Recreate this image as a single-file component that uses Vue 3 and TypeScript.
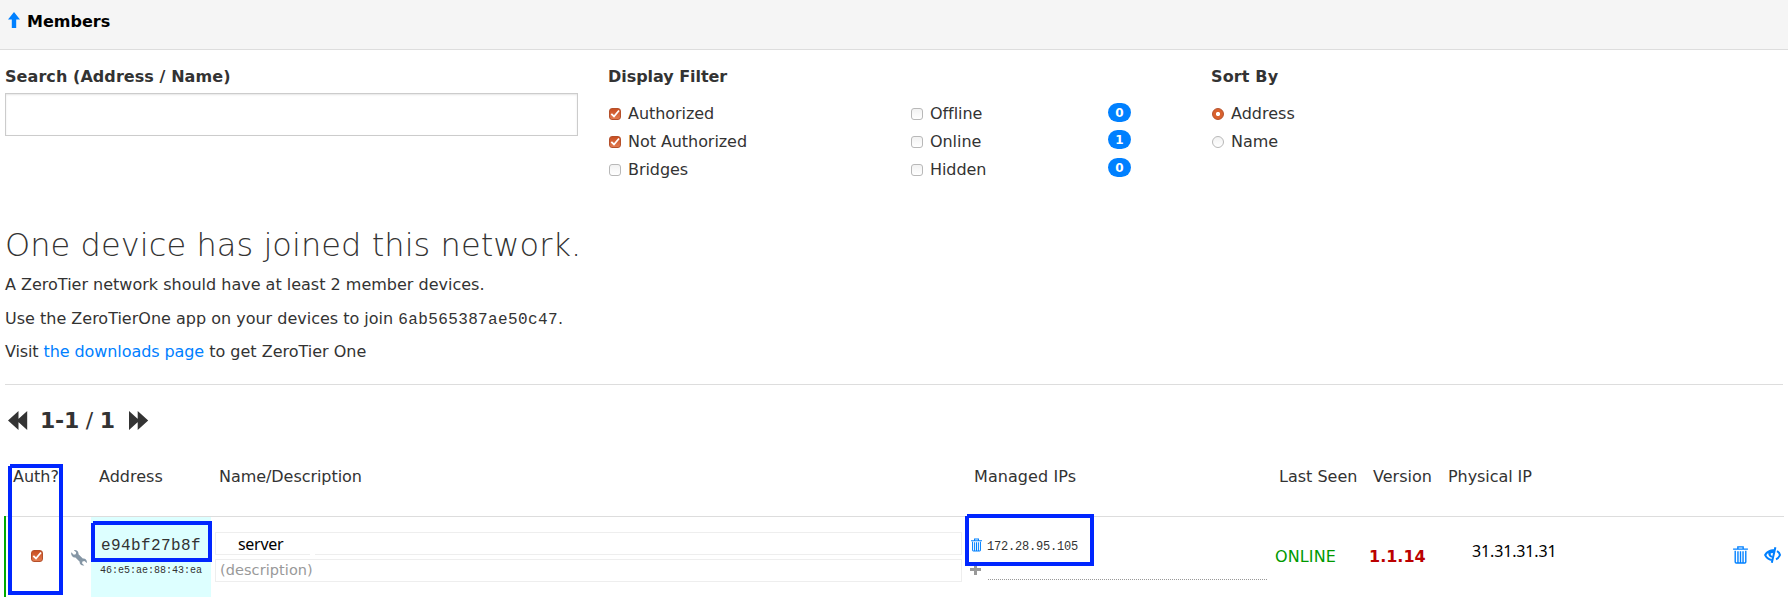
<script setup lang="ts">
interface Filter { label: string; checked: boolean }
interface Status { label: string; count: number }
const filters: Filter[] = [
  { label: 'Authorized', checked: true },
  { label: 'Not Authorized', checked: true },
  { label: 'Bridges', checked: false },
]
const statuses: Status[] = [
  { label: 'Offline', count: 0 },
  { label: 'Online', count: 1 },
  { label: 'Hidden', count: 0 },
]
</script>

<template>
  <main class="page">
    <header class="bar">
      <svg class="up" viewBox="0 0 12 16"><path d="M6 0L12 7.500H8.200V16H3.800V7.500H0Z" /></svg>
      <span class="bar-title">Members</span>
    </header>

    <section class="tools">
      <div class="col">
        <div class="title search-title">Search (Address / Name)</div>
        <input class="search" type="text" />
      </div>
      <div class="col">
        <div class="title filter-title">Display Filter</div>
        <div class="split">
          <div>
            <label v-for="f in filters" :key="f.label" class="opt tight">
              <span class="box" :class="{ on: f.checked }"><svg v-if="f.checked" viewBox="0 0 12 12"><path d="M2.300 5.800L5 8.500L10 2.500" /></svg></span>{{ f.label }}
            </label>
          </div>
          <div>
            <label v-for="s in statuses" :key="s.label" class="opt tight">
              <span class="box"></span>{{ s.label }}<b class="badge">{{ s.count }}</b>
            </label>
          </div>
        </div>
      </div>
      <div class="col">
        <div class="title sort-title">Sort By</div>
        <label class="opt"><span class="radio on"></span>Address</label>
        <label class="opt"><span class="radio"></span>Name</label>
      </div>
    </section>

    <section class="intro">
      <h2>One device has joined this network.</h2>
      <p>A ZeroTier network should have at least 2 member devices.</p>
      <p class="join">Use the ZeroTierOne app on your devices to join <code>6ab565387ae50c47</code>.</p>
      <p><span class="visit">Visit </span><a>the downloads page</a> to get ZeroTier One</p>
    </section>

    <nav class="pager">
      <svg viewBox="0 0 20 19"><path d="M10.500 0V19L0 9.500ZM19.200 0V19L8.700 9.500Z" /></svg>
      <span class="range"><b>1-1</b> / <b>1</b></span>
      <svg viewBox="0 0 20 19"><path d="M0 0V19L10.500 9.500ZM8.700 0V19L19.200 9.500Z" /></svg>
    </nav>

    <section class="members">
      <div class="row head">
        <span class="auth">Auth?</span><span></span><span class="h-addr">Address</span><span class="h-name">Name/Description</span>
        <span class="h-ips">Managed IPs</span><span class="h-seen">Last Seen</span><span class="h-ver">Version</span><span class="h-phys">Physical IP</span>
      </div>
      <div class="row item">
        <div class="c-auth"><span class="box on"><svg viewBox="0 0 12 12"><path d="M2.300 5.800L5 8.500L10 2.500" /></svg></span></div>
        <div class="c-tool">
          <svg viewBox="0 0 16 16"><path d="M0.300 2.300L2.800 4.700L4.700 4.200L5.200 2.300L2.900 0.200C5.500-.4 8 1.800 7.500 4.300L11.800 8.600C14 8 16.500 10.200 15.900 13L13.400 10.900L11.500 11.400L11 13.300L13.300 15.500C10.300 16.200 8.200 13.700 8.700 11.700L4.400 7.400C2 8-.5 5.500.3 2.300Z" /></svg>
        </div>
        <div class="c-addr"><code>e94bf27b8f</code><code class="mac">46:e5:ae:88:43:ea</code></div>
        <div class="c-name">
          <div class="field name">server</div>
          <div class="field desc">(description)</div>
        </div>
        <div class="c-ips">
          <div class="ip">
            <svg class="trash" viewBox="0 0 14 17"><path d="M0 3H14M4.500 3V.8H9.500V3M2 4.500V15Q2 16 3 16H11Q12 16 12 15V4.500M4.600 5V15.500M7 5V15.500M9.400 5V15.500" /></svg>
            <code>172.28.95.105</code>
          </div>
          <div class="add"><svg viewBox="0 0 11 11"><path d="M4 0H7V4H11V7H7V11H4V7H0V4H4Z" /></svg><span class="dots"></span></div>
        </div>
        <div class="c-seen">ONLINE</div>
        <div class="c-ver">1.1.14</div>
        <div class="c-phys">31.31.31.31</div>
        <div class="c-act">
          <svg class="trash" viewBox="0 0 14 17"><path d="M0 3H14M4.500 3V.8H9.500V3M2 4.500V15Q2 16 3 16H11Q12 16 12 15V4.500M4.600 5V15.500M7 5V15.500M9.400 5V15.500" /></svg>
          <svg class="hide" viewBox="0 0 17 16">
            <path class="lid" d="M10.400 2.200C5.500 2.200 1.800 4 0 8C1.500 11.300 4 13.300 7.600 13.900L8 12C5 11.400 3.300 9.800 2.400 8.200C2.800 7.200 3.400 6.500 4.200 6C4.200 8.600 5.600 10.400 8.300 10.700L8.700 9C7.200 8.600 6.400 7.600 6.800 6.200L9.800 6Z" />
            <path d="M11.400.2L7.800 15.800M13 4.200C14.500 5 15.600 6.300 16 8C15.200 10 13.700 11.500 12 12.300" />
          </svg>
        </div>
      </div>
      <i class="mark m1"></i><i class="mark m2"></i><i class="mark m3"></i>
    </section>
  </main>
</template>

<style>
body { margin: 0; background: #fff; }
</style>
<style scoped>
* { box-sizing: border-box; }
.page { height: 609px; overflow: hidden; font: 16px/28px "DejaVu Sans", sans-serif; color: #333; }
code { font-family: "Liberation Mono", monospace; letter-spacing: .38px; }
.bar { height: 50px; background: #f5f5f5; border-bottom: 1px solid #ddd; display: flex; padding: 12px 0 0 8px; color: #000; font-weight: bold; line-height: 20px; }
.up { width: 12px; height: 16px; fill: #0080ff; margin-right: 7px; }
.tools { display: grid; grid-template-columns: 603px 603px 1fr; padding: 14px 0 0 5px; height: 166px; }
.title { font-weight: bold; line-height: 26px; height: 36px; }
.search-title { height: 29px; letter-spacing: .07px; }
.filter-title { letter-spacing: -.05px; }
.sort-title { letter-spacing: .15px; }
.search { display: block; width: 573px; height: 43px; border: 1px solid #ccc; box-shadow: inset 0 1px 2px rgba(0,0,0,.1); }
.split { display: grid; grid-template-columns: 302px 1fr; }
.opt { display: flex; align-items: center; height: 28px; }
.tight { letter-spacing: -.06px; }
.box, .radio { width: 12px; height: 12px; margin: 0 7px 0 1px; border: 1px solid #b8b8b8; border-radius: 3px; background: linear-gradient(#f2f2f2, #fff); display: block; flex: none; }
.box.on { border-color: #b5502b; background: linear-gradient(#c94f22, #e27b50); }
.box svg { display: block; width: 12px; height: 12px; margin: -1px; fill: none; stroke: #fff; stroke-width: 1.8; }
.radio { border-radius: 50%; }
.radio.on { border-color: #b5502b; background: radial-gradient(circle, #fff 0 1.8px, #d9622f 2.4px); }
.badge { position: relative; top: -2px; width: 23px; height: 19px; border-radius: 10px; background: #0080ff; color: #fff; font-size: 12px; line-height: 20px; letter-spacing: 0; text-align: center; margin-left: auto; margin-right: 80px; }
.opt:nth-child(n+2) .badge { top: -3px; }
.intro { margin: 8px 5px 0; height: 161px; border-bottom: 1px solid #ddd; }
h2 { margin: 0; font-size: 32px; line-height: 42px; font-weight: 200; height: 47px; letter-spacing: .07px; }
p { margin: 0; height: 33.5px; line-height: 28px; }
.join { line-height: 27px; }
.visit { letter-spacing: -.12px; }
a { color: #0080ff; letter-spacing: -.08px; }
.pager { display: flex; align-items: center; padding: 0 0 0 8px; height: 72px; font-size: 22px; }
.pager svg { width: 20px; height: 19px; fill: #333; position: relative; top: -.5px; }
.range { margin: 0 14px 0 12px; width: 75px; letter-spacing: -.25px; white-space: nowrap; }
.members { position: relative; height: 152px; padding-left: 4px; }
.row { display: grid; grid-template-columns: 59px 28px 120px 754px 305px 95px 74px 1fr 55px; }
.head { height: 60px; margin-right: 4px; border-bottom: 1px solid #ddd; line-height: 40px; }
.head span { white-space: nowrap; }
.auth { padding-left: 9px; } .h-addr { padding-left: 8px; } .h-name { padding-left: 8px; letter-spacing: -.05px; } .h-ips { padding-left: 9px; letter-spacing: .08px; } .h-seen { padding-left: 9px; } .h-ver { padding-left: 8px; } .h-phys { padding-left: 9px; letter-spacing: -.07px; }
.item { height: 81px; border-left: 2px solid #0a0; margin-top: -1px; grid-template-columns: 57px 28px 120px 754px 305px 95px 74px 1fr 55px; }
.c-auth { padding: 34px 0 0 24px; }
.c-tool { padding: 34px 0 0 8px; }
.c-tool svg { display: block; width: 16px; height: 16px; fill: #8596a5; }
.c-addr { background: #dff; margin-top: 1px; padding: 14px 0 0 10px; }
.c-addr code { display: block; line-height: 30px; height: 32px; letter-spacing: .4px; }
.c-addr .mac { font-size: 10px; line-height: 16px; letter-spacing: 0; margin-left: -1px; }
.c-name { padding: 16px 3px 0 4px; }
.field { border: 1px solid #eee; height: 23px; line-height: 21px; margin-bottom: 4px; padding-left: 4px; }
.name { position: relative; font-family: "Noto Sans", sans-serif; color: #000; padding-left: 22px; line-height: 23px; letter-spacing: -.3px; }
.name::after { content: ""; position: absolute; left: 94px; bottom: -1px; width: 5px; height: 1px; background: #fff; }
.desc { font-size: 14.5px; color: #999; letter-spacing: .07px; }
.c-ips { padding: 21px 0 0 6px; }
.ip { display: flex; height: 25px; font-size: 12px; line-height: 20px; }
.ip code { letter-spacing: -.2px; }
.trash { fill: none; stroke: #0080ff; stroke-width: 1.3; }
.ip .trash { width: 11px; height: 14px; margin: 1px 5px 0 0; }
.add { display: flex; height: 18px; }
.add svg { width: 11px; height: 11px; fill: #999; margin: 2px 0 0 -1px; }
.dots { width: 279px; height: 18px; margin-left: 7px; border-bottom: 1px dotted #999; }
.c-seen { color: #090; padding: 27px 0 0 5px; letter-spacing: .12px; }
.c-ver { color: #b00; font-weight: bold; padding: 27px 0 0 4px; }
.c-phys { color: #000; font-family: "Noto Sans", sans-serif; padding: 21px 0 0 33px; letter-spacing: -.15px; }
.c-act { display: flex; padding-top: 30px; }
.c-act .trash { width: 15px; height: 18px; margin-right: 16px; }
.hide { width: 17px; height: 16px; fill: none; stroke: #0080ff; stroke-width: 2; margin-top: 1px; }
.hide .lid { fill: #0080ff; stroke: none; }
.mark { position: absolute; border: 4px solid #0026ff; clip-path: polygon(2px 0, 100% 0, 100% 100%, 0 100%, 0 2px, 2px 2px); }
.m1 { left: 8px; top: 7px; width: 55px; height: 131px; }
.m2 { left: 91px; top: 64px; width: 121px; height: 41px; }
.m3 { left: 965px; top: 57px; width: 129px; height: 52px; }
</style>
